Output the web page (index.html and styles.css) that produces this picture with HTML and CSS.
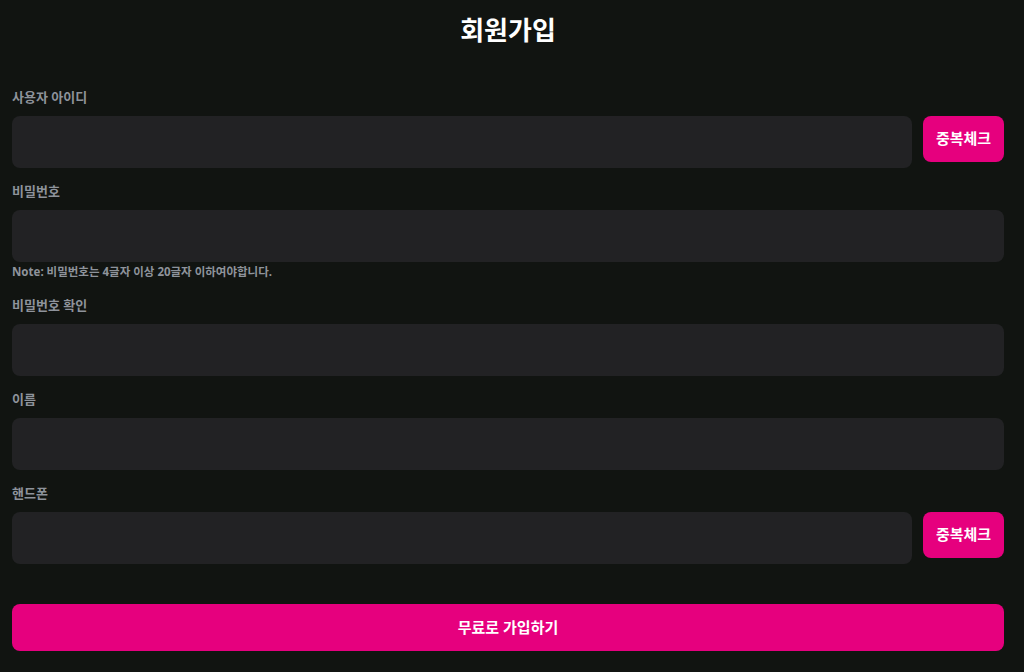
FILE: index.html
```html
<!DOCTYPE html>
<html lang="ko">
<head>
    <meta charset="UTF-8">
    <meta name="viewport" content="width=device-width,initial-scale=1">
    <title>회원가입</title>
    <link rel="stylesheet" href="styles.css">
</head>
<body>
    <section class="join">
        <h1 class="join-title">회원가입</h1>
        <form class="join-form">
            <div class="field">
                <label class="field-label">사용자 아이디</label>
                <div class="field-row">
                    <input class="field-input" type="text">
                    <button class="check-btn" type="button">중복체크</button>
                </div>
            </div>
            <div class="field">
                <label class="field-label">비밀번호</label>
                <input class="field-input" type="password">
                <p class="field-note">Note: 비밀번호는 4글자 이상 20글자 이하여야합니다.</p>
            </div>
            <div class="field">
                <label class="field-label">비밀번호 확인</label>
                <input class="field-input" type="password">
            </div>
            <div class="field">
                <label class="field-label">이름</label>
                <input class="field-input" type="text">
            </div>
            <div class="field">
                <label class="field-label">핸드폰</label>
                <div class="field-row">
                    <input class="field-input" type="text">
                    <button class="check-btn" type="button">중복체크</button>
                </div>
            </div>
            <button class="submit-btn" type="button">무료로 가입하기</button>
        </form>
    </section>
</body>
</html>
```

FILE: styles.css
```css
/* reset */
body{
    margin: 0;
    background: #111411;
    font-family: "Noto Sans", "Noto Sans CJK KR", sans-serif;
}
input,button{
    -webkit-appearance: none;
    border: none;
    outline: none;
    font-family: inherit;
}
/* join */
.join{
    padding: 0 20px 0 12px;
}
.join-title{
    margin: 12px 0 39px;
    font-size: 26px;
    line-height: 36px;
    font-weight: 700;
    color: #fff;
    text-align: center;
}
.join-form{
    display: flex;
    flex-direction: column;
}
.field{
    display: flex;
    flex-direction: column;
    margin-bottom: 13px;
}
.field-label{
    font-size: 13px;
    line-height: 20px;
    font-weight: 700;
    color: #8e939b;
    margin-bottom: 9px;
}
.field-row{
    display: flex;
    align-items: flex-start;
    gap: 11px;
}
.field-input{
    flex: none;
    height: 52px;
    border-radius: 8px;
    background: #222224;
    color: #fff;
    padding: 0 14px;
    font-size: 14px;
    box-sizing: border-box;
}
.field-row .field-input{
    flex: 1;
    min-width: 0;
}
.field-note{
    margin: 2px 0 2px;
    font-size: 11.5px;
    line-height: 16px;
    font-weight: 700;
    color: #8e939b;
}
.check-btn{
    width: 81px;
    height: 46px;
    padding: 0 0 4px;
    border-radius: 8px;
    background: #e6007e;
    color: #fff;
    font-size: 15px;
    font-weight: 700;
}
.submit-btn{
    margin-top: 27px;
    height: 47px;
    padding: 0 0 2px;
    border-radius: 8px;
    background: #e6007e;
    color: #fff;
    font-size: 15px;
    font-weight: 700;
}
```
